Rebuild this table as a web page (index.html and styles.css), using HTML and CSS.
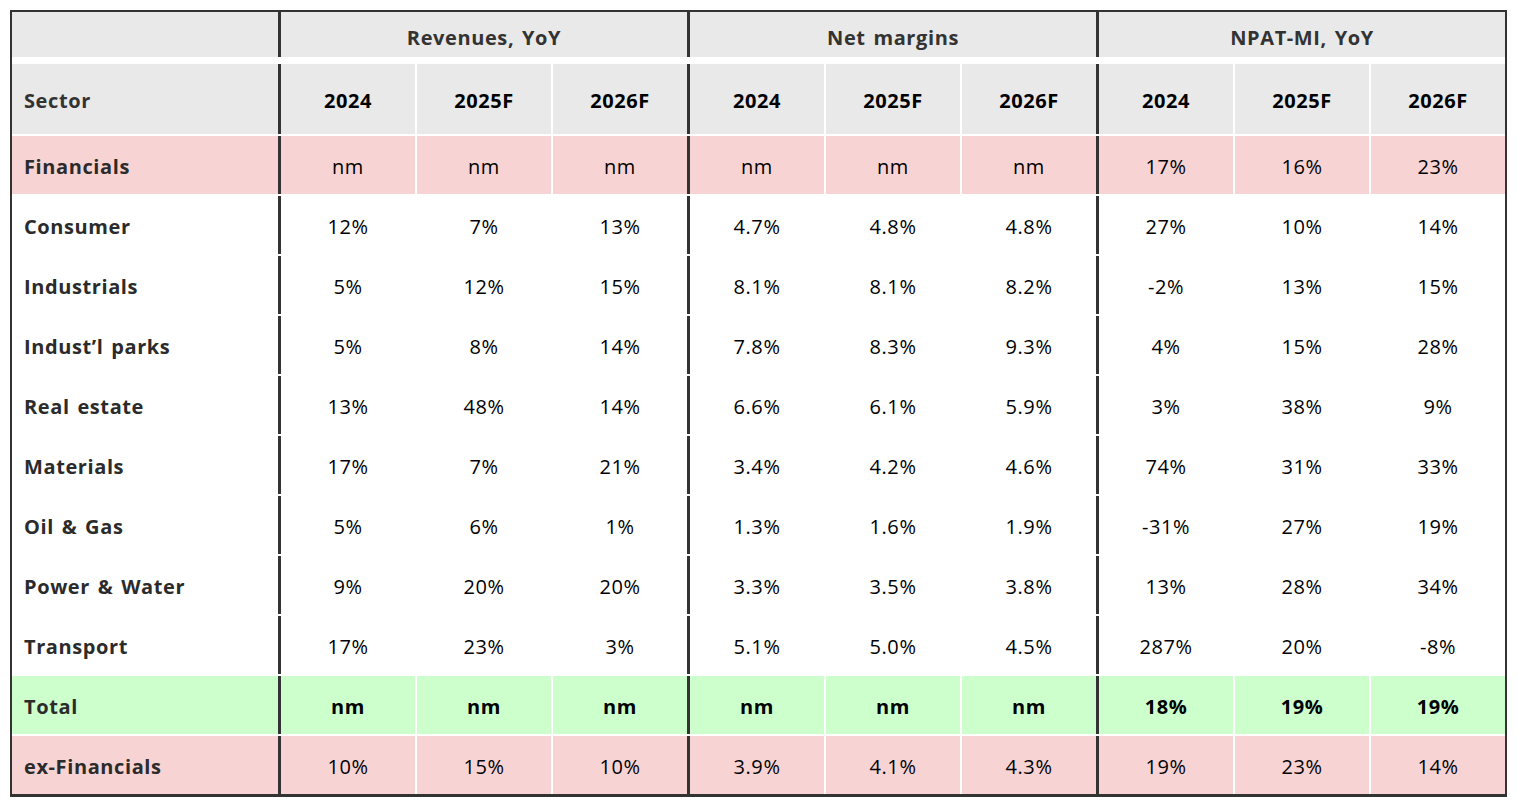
FILE: index.html
```html
<!DOCTYPE html>
<html lang="en">
<head>
<meta charset="utf-8">
<title>Sector growth table</title>
<link rel="stylesheet" href="styles.css">
</head>
<body>
<div class="table">
  <div class="row head1">
    <div class="cell name"></div>
    <div class="cell group">Revenues, YoY</div>
    <div class="cell group">Net margins</div>
    <div class="cell group">NPAT-MI, YoY</div>
  </div>
  <div class="row head2">
    <div class="cell name">Sector</div>
    <div class="cell g">2024</div><div class="cell">2025F</div><div class="cell">2026F</div>
    <div class="cell g">2024</div><div class="cell">2025F</div><div class="cell">2026F</div>
    <div class="cell g">2024</div><div class="cell">2025F</div><div class="cell">2026F</div>
  </div>
  <div class="row data pink">
    <div class="cell name">Financials</div>
    <div class="cell g">nm</div><div class="cell">nm</div><div class="cell">nm</div>
    <div class="cell g">nm</div><div class="cell">nm</div><div class="cell">nm</div>
    <div class="cell g">17%</div><div class="cell">16%</div><div class="cell">23%</div>
  </div>
  <div class="row data">
    <div class="cell name">Consumer</div>
    <div class="cell g">12%</div><div class="cell">7%</div><div class="cell">13%</div>
    <div class="cell g">4.7%</div><div class="cell">4.8%</div><div class="cell">4.8%</div>
    <div class="cell g">27%</div><div class="cell">10%</div><div class="cell">14%</div>
  </div>
  <div class="row data">
    <div class="cell name">Industrials</div>
    <div class="cell g">5%</div><div class="cell">12%</div><div class="cell">15%</div>
    <div class="cell g">8.1%</div><div class="cell">8.1%</div><div class="cell">8.2%</div>
    <div class="cell g">-2%</div><div class="cell">13%</div><div class="cell">15%</div>
  </div>
  <div class="row data">
    <div class="cell name">Indust’l parks</div>
    <div class="cell g">5%</div><div class="cell">8%</div><div class="cell">14%</div>
    <div class="cell g">7.8%</div><div class="cell">8.3%</div><div class="cell">9.3%</div>
    <div class="cell g">4%</div><div class="cell">15%</div><div class="cell">28%</div>
  </div>
  <div class="row data">
    <div class="cell name">Real estate</div>
    <div class="cell g">13%</div><div class="cell">48%</div><div class="cell">14%</div>
    <div class="cell g">6.6%</div><div class="cell">6.1%</div><div class="cell">5.9%</div>
    <div class="cell g">3%</div><div class="cell">38%</div><div class="cell">9%</div>
  </div>
  <div class="row data">
    <div class="cell name">Materials</div>
    <div class="cell g">17%</div><div class="cell">7%</div><div class="cell">21%</div>
    <div class="cell g">3.4%</div><div class="cell">4.2%</div><div class="cell">4.6%</div>
    <div class="cell g">74%</div><div class="cell">31%</div><div class="cell">33%</div>
  </div>
  <div class="row data">
    <div class="cell name">Oil &amp; Gas</div>
    <div class="cell g">5%</div><div class="cell">6%</div><div class="cell">1%</div>
    <div class="cell g">1.3%</div><div class="cell">1.6%</div><div class="cell">1.9%</div>
    <div class="cell g">-31%</div><div class="cell">27%</div><div class="cell">19%</div>
  </div>
  <div class="row data">
    <div class="cell name">Power &amp; Water</div>
    <div class="cell g">9%</div><div class="cell">20%</div><div class="cell">20%</div>
    <div class="cell g">3.3%</div><div class="cell">3.5%</div><div class="cell">3.8%</div>
    <div class="cell g">13%</div><div class="cell">28%</div><div class="cell">34%</div>
  </div>
  <div class="row data">
    <div class="cell name">Transport</div>
    <div class="cell g">17%</div><div class="cell">23%</div><div class="cell">3%</div>
    <div class="cell g">5.1%</div><div class="cell">5.0%</div><div class="cell">4.5%</div>
    <div class="cell g">287%</div><div class="cell">20%</div><div class="cell">-8%</div>
  </div>
  <div class="row data green total">
    <div class="cell name">Total</div>
    <div class="cell g">nm</div><div class="cell">nm</div><div class="cell">nm</div>
    <div class="cell g">nm</div><div class="cell">nm</div><div class="cell">nm</div>
    <div class="cell g">18%</div><div class="cell">19%</div><div class="cell">19%</div>
  </div>
  <div class="row data pink">
    <div class="cell name">ex-Financials</div>
    <div class="cell g">10%</div><div class="cell">15%</div><div class="cell">10%</div>
    <div class="cell g">3.9%</div><div class="cell">4.1%</div><div class="cell">4.3%</div>
    <div class="cell g">19%</div><div class="cell">23%</div><div class="cell">14%</div>
  </div>
</div>
</body>
</html>
```

FILE: styles.css
```css
html, body {
  margin: 0;
  padding: 0;
  background: #ffffff;
}

body {
  padding: 10px;
  font-family: "Open Sans", Lato, sans-serif;
  font-size: 20px;
  letter-spacing: 0.6px;
  word-spacing: 2px;
  color: #000;
}

.table {
  width: 1493px;
  border: 2px solid #333333;
  border-bottom-width: 3px;
  display: flex;
  flex-direction: column;
  gap: 2px;
  background: #ffffff;
}

.row {
  display: grid;
  grid-template-columns: 266px 137px 136px 136px 137px 136px 136px 137px 136px 136px;
}

.cell {
  display: flex;
  align-items: center;
  justify-content: center;
  border-left: 2px solid #ffffff;
  padding-top: 2px;
}

.cell.name {
  border-left: none;
  justify-content: flex-start;
  padding-left: 12px;
  font-weight: bold;
  color: #2b2b2b;
}

.cell.g,
.cell.group {
  border-left: 3px solid #333333;
}

.head1 {
  height: 45px;
  margin-bottom: 5px;
  grid-template-columns: 266px 409px 409px 409px;
}

.head1 .cell {
  background: #e9e9e9;
  font-weight: bold;
  color: #333333;
  padding-top: 6px;
}

.head2 {
  height: 70px;
}

.head2 .cell {
  background: #e9e9e9;
  font-weight: bold;
  color: #000;
}

.head2 .cell.name {
  color: #333333;
}

.data {
  height: 58px;
}

.pink .cell {
  background: #f8d3d3;
}

.green .cell {
  background: #ccffcc;
}

.total .cell {
  font-weight: bold;
}
```
